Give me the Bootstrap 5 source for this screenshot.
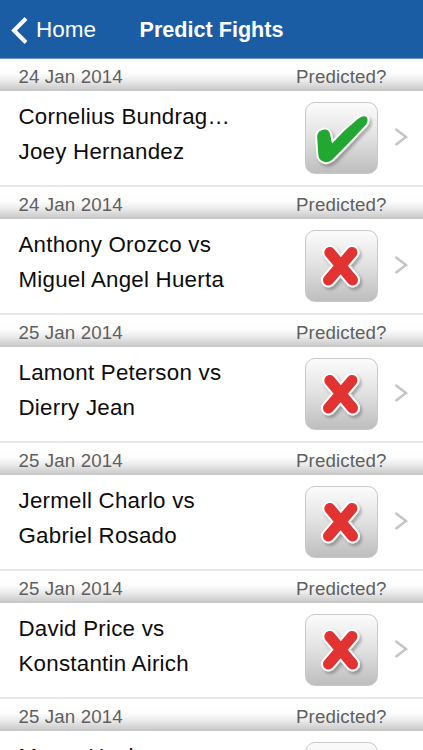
<!DOCTYPE html>
<html lang="en">
<head>
<meta charset="utf-8">
<meta name="viewport" content="width=device-width, initial-scale=1">
<title>Predict Fights</title>
<link href="https://cdn.jsdelivr.net/npm/bootstrap@5.3.0/dist/css/bootstrap.min.css" rel="stylesheet">
<style>
body{font-family:"Liberation Sans",Arial,sans-serif;height:750px;overflow:hidden;background:#fff;color:#0c0c0c}
#fights{height:691px;overflow:hidden}
.top-bar{height:59px;background:#1b5da5;border-bottom:1px solid #6f93bd;display:grid!important;grid-template-columns:1fr auto 1fr;padding:0 11px}
.top-title{font-size:21.6px;font-weight:700;line-height:59px}
.back-link{font-size:22.5px;line-height:59px;gap:8px}
.day-head{height:32px;padding:4px 36.5px 0 18.5px;font-size:18.7px;letter-spacing:.12px;color:#5f5f5f;background:linear-gradient(#fff 0%,#fdfdfd 45%,#e8e8e8 70%,#c5c5c5 100%)}
.fight-row{height:96px;padding:0 15.5px 0 18.5px;border-bottom:2px solid #e8e8e8}
.fighters{font-size:22.3px;letter-spacing:.25px;line-height:34.2px;padding-top:9.4px;height:94px}
.pick{width:73px;height:72px;margin-top:11px;margin-right:15.5px;border:1.5px solid #c8c8c8;border-radius:10px;background:linear-gradient(#fcfcfc,#e4e4e4 45%,#bebebe)}
.pick svg,.chev,.back-link svg{display:block}
.chev{margin-top:36px}
</style>
<script src="https://cdn.jsdelivr.net/npm/bootstrap@5.3.0/dist/js/bootstrap.bundle.min.js"></script>
</head>
<body>
<svg width="0" height="0" class="position-absolute" aria-hidden="true">
<defs>
<filter id="shade" filterUnits="userSpaceOnUse" x="0" y="0" width="70" height="70"><feDropShadow dx="2" dy="2.5" stdDeviation="1.8" flood-color="#000" flood-opacity=".28"/></filter>
<symbol id="yes" viewBox="0 0 70 70"><path d="M11.200 34Q11.200 29 15 27.500Q22 24.500 24 31L26 40.500Q38 27 51.800 16Q57.500 11.500 61 14.500Q62.500 17.500 60.200 21.500Q43 40 26.500 56.500Q21.500 60.500 17.500 58.500Q12.500 57 12.300 51Z" fill="#22a730" stroke="#fff" stroke-width="4" stroke-linejoin="round" paint-order="stroke" filter="url(#shade)"/></symbol>
<symbol id="no" viewBox="0 0 70 70"><g fill="none" stroke-linecap="round" filter="url(#shade)"><path d="M23.800 21.500L46.500 49M46 21.500L22.500 49" stroke="#fff" stroke-width="15"/><path d="M23.800 21.500L46.500 49M46 21.500L22.500 49" stroke="#e33133" stroke-width="11"/></g></symbol>
<symbol id="arrow" viewBox="0 0 14 20"><path d="M1.500 2L12 10L1.500 18" fill="none" stroke="#c5c5c5" stroke-width="2.600"/></symbol>
</defs>
</svg>
<header class="top-bar text-white">
<a class="back-link d-flex align-items-center text-white text-decoration-none" href="#"><svg width="17" height="28" viewBox="0 0 17 28"><path d="M15 2.500L3 14.500L15 26.500" fill="none" stroke="#fff" stroke-width="4"/></svg><span>Home</span></a>
<h1 class="top-title m-0">Predict Fights</h1>
</header>
<main id="fights"></main>
<script>
const fights = [
  ["24 Jan 2014", "Cornelius Bundrag…", "Joey Hernandez", "yes"],
  ["24 Jan 2014", "Anthony Orozco vs", "Miguel Angel Huerta", "no"],
  ["25 Jan 2014", "Lamont Peterson vs", "Dierry Jean", "no"],
  ["25 Jan 2014", "Jermell Charlo vs", "Gabriel Rosado", "no"],
  ["25 Jan 2014", "David Price vs", "Konstantin Airich", "no"],
  ["25 Jan 2014", "Marco Huck", "", "no"]
];
document.getElementById("fights").innerHTML = fights.map(([day, first, second, pick]) => `
<section>
<div class="day-head d-flex justify-content-between align-items-center"><span>${day}</span><span>Predicted?</span></div>
<div class="fight-row d-flex">
<div class="fighters flex-grow-1 text-nowrap"><div>${first}</div><div>${second}</div></div>
<div class="pick flex-shrink-0"><svg width="70" height="70"><use href="#${pick}"/></svg></div>
<svg class="chev flex-shrink-0" width="14" height="20"><use href="#arrow"/></svg>
</div>
</section>`).join("");
</script>
</body>
</html>
